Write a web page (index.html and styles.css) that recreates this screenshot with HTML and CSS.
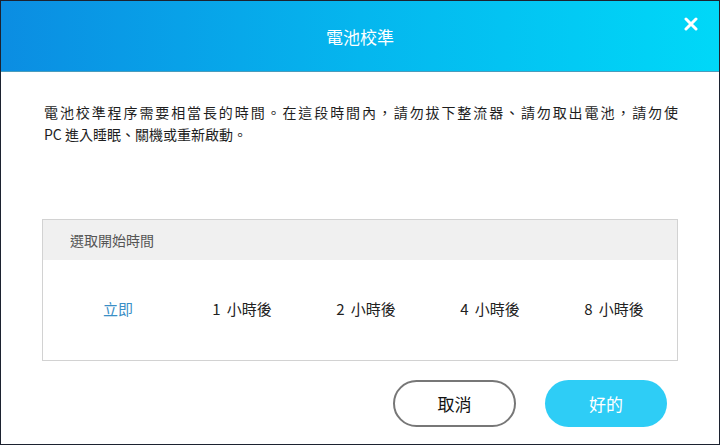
FILE: index.html
```html
<!DOCTYPE html>
<html lang="zh-Hant">
<head>
<meta charset="utf-8">
<title>電池校準</title>
<link rel="stylesheet" href="styles.css">
</head>
<body>
<div class="dialog">
  <header class="header">
    <h1 class="title">電池校準</h1>
    <button class="close" aria-label="關閉">
      <svg width="14" height="14" viewBox="0 0 14 14"><path d="M2 2 L12 12 M12 2 L2 12" stroke="#fff" stroke-width="3" stroke-linecap="round"/></svg>
    </button>
  </header>
  <main class="content">
    <p class="desc"><span class="line justify">電池校準程序需要相當長的時間。在這段時間內，請勿拔下整流器、請勿取出電池，請勿使</span><span class="line">PC 進入睡眠、關機或重新啟動。</span></p>
    <section class="panel">
      <div class="panel-head">選取開始時間</div>
      <div class="options">
        <span class="opt active">立即</span>
        <span class="opt">1 小時後</span>
        <span class="opt">2 小時後</span>
        <span class="opt">4 小時後</span>
        <span class="opt">8 小時後</span>
      </div>
    </section>
    <div class="actions">
      <button class="btn cancel">取消</button>
      <button class="btn ok">好的</button>
    </div>
  </main>
</div>
</body>
</html>
```

FILE: styles.css
```css
* { box-sizing: border-box; }
html, body { margin: 0; padding: 0; }
body {
  width: 720px;
  height: 445px;
  font-family: "Noto Sans CJK TC", "Noto Sans", sans-serif;
  background: #fff;
}
.dialog {
  width: 720px;
  height: 445px;
  border: 1px solid #1c2230;
  background: #fff;
  display: flex;
  flex-direction: column;
}
.header {
  position: relative;
  height: 71px;
  flex: none;
  background: linear-gradient(to right, #0b8de2 0%, #05b6ee 50%, #00d8f8 100%);
  border-bottom: 1px solid #4a9cbc;
  display: flex;
  align-items: center;
  justify-content: center;
}
.title {
  margin: 0;
  margin-top: 1px;
  font-size: 17px;
  font-weight: 400;
  color: #fff;
  line-height: 24px;
}
.close {
  position: absolute;
  top: 15px;
  right: 20px;
  width: 16px;
  height: 16px;
  padding: 0;
  border: 0;
  background: none;
  display: flex;
  align-items: center;
  justify-content: center;
}
.content {
  flex: 1;
  padding: 29px 41px 0 41px;
  display: flex;
  flex-direction: column;
}
.desc {
  margin: 0 0 0 2px;
  width: 634px;
  font-size: 14px;
  line-height: 22px;
  color: #1e1e1e;
}
.line { display: block; }
.justify { text-align: justify; text-align-last: justify; }
.panel {
  margin-top: 74px;
  height: 142px;
  border: 1px solid #d2d2d2;
  display: flex;
  flex-direction: column;
}
.panel-head {
  height: 40px;
  background: #f0f0f0;
  padding-left: 27px;
  display: flex;
  align-items: center;
  font-size: 14px;
  color: #555;
}
.options {
  flex: 1;
  display: grid;
  grid-template-columns: repeat(5, 124px);
  padding-left: 13px;
  padding-bottom: 4px;
  align-items: center;
}
.opt {
  text-align: center;
  font-size: 15px;
  word-spacing: 3px;
  color: #222;
}
.opt.active { color: #3a8fc6; }
.actions {
  margin-top: 19px;
  display: flex;
  justify-content: flex-end;
  gap: 29px;
  padding-right: 11px;
}
.btn {
  height: 47px;
  border-radius: 24px;
  font-family: inherit;
  font-size: 17px;
  padding: 0;
}
.cancel {
  width: 123px;
  border: 2px solid #777;
  background: #fff;
  color: #111;
}
.ok {
  width: 122px;
  border: 0;
  background: #2ecdf6;
  color: #fff;
}
```
